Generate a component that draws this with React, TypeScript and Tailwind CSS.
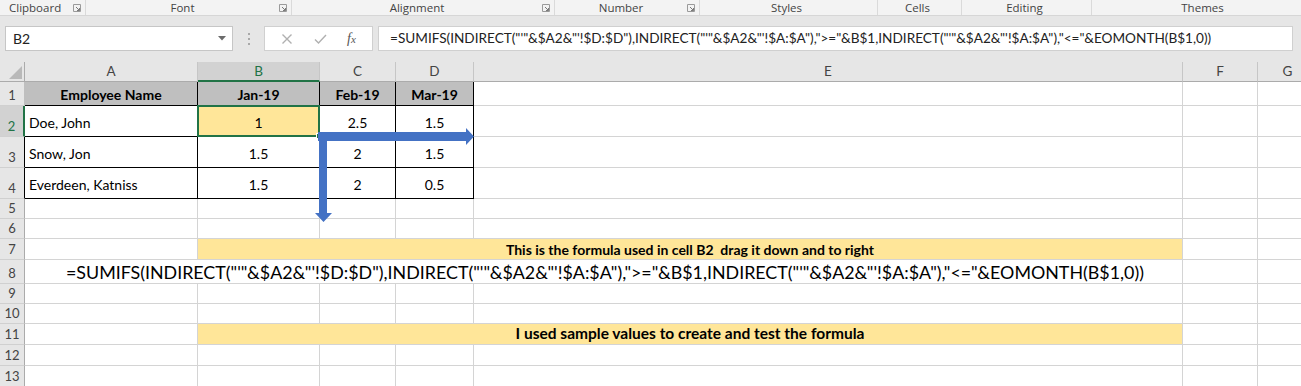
import React from 'react';

const W = { hdr: 25, A: 173, B: 122, C: 76, D: 78, E: 709, F: 75, G: 60 };

const formula =
    '=SUMIFS(INDIRECT("\'"&$A2&"\'!$D:$D"),INDIRECT("\'"&$A2&"\'!$A:$A"),">="&B$1,INDIRECT("\'"&$A2&"\'!$A:$A"),"<="&EOMONTH(B$1,0))';

const Launcher = () => (
    <svg width="8" height="8" viewBox="0 0 8 8" className="shrink-0">
        <path d="M0.5 7.5 V0.5 H7.5 V7.5 Z" fill="none" stroke="#9a9a9a" strokeWidth="1" />
        <path d="M3 3 L6.5 6.5 M4 6.5 H6.5 V4" fill="none" stroke="#7a7a7a" strokeWidth="1" />
    </svg>
);

const groups: { label: string; width: number; launcher?: boolean; left?: boolean }[] = [
    { label: 'Clipboard', width: 86, launcher: true, left: true },
    { label: 'Font', width: 206, launcher: true },
    { label: 'Alignment', width: 263, launcher: true },
    { label: 'Number', width: 145, launcher: true },
    { label: 'Styles', width: 178 },
    { label: 'Cells', width: 84 },
    { label: 'Editing', width: 130 },
    { label: 'Themes', width: 226 },
];

// a single sheet cell
const Cell: React.FC<{
    w: number;
    className?: string;
    children?: React.ReactNode;
}> = ({ w, className = '', children }) => (
    <div
        style={{ width: w }}
        className={`shrink-0 flex border-r border-b overflow-visible relative ${className}`}
    >
        {children}
    </div>
);

const RowHead: React.FC<{ n: number; h: string; edge?: string; active?: boolean }> = ({ n, h, edge = 'border-r-[#ababab]', active }) => (
    <div
        style={{ width: W.hdr }}
        className={`shrink-0 flex items-end justify-center pb-[1px] border-r border-b border-b-[#d0d0d0] ${edge} ${h} ${active ? 'bg-[#d2d2d2] text-[#217346]' : 'bg-[#e6e6e6] text-[#444]'}`}
    >
        <span className="text-[13px] leading-[18px]">{n}</span>
    </div>
);

const grid = 'border-[#d4d4d4]';
const tbl = 'border-black';

const TableRow: React.FC<{ n: number; name: string; vals: string[]; selected?: boolean }> = ({ n, name, vals, selected }) => (
    <div className="flex h-[31px]">
        <RowHead n={n} h="h-[31px]" edge={selected ? 'border-r-2 border-r-[#217346]' : 'border-r-black'} active={selected} />
        <Cell w={W.A} className={`${tbl} items-end pb-[3px] pl-[4px]`}>
            <span className="whitespace-nowrap">{name}</span>
        </Cell>
        <Cell w={W.B} className={`${tbl} items-center justify-center pt-[2px] ${selected ? 'bg-[#ffe699]' : ''}`}>
            <span>{vals[0]}</span>
            {selected && (
                <>
                    <div className="absolute -left-px -top-px -right-px -bottom-px border-2 border-[#217346]" />
                    <div className="absolute -right-[3px] -bottom-[3px] w-[6px] h-[6px] bg-[#217346] border border-white" />
                </>
            )}
        </Cell>
        <Cell w={W.C} className={`${tbl} items-center justify-center pt-[2px]`}>
            <span>{vals[1]}</span>
        </Cell>
        <Cell w={W.D} className={`${tbl} items-center justify-center pt-[2px]`}>
            <span>{vals[2]}</span>
        </Cell>
        <Cell w={W.E} className={grid} />
        <Cell w={W.F} className={grid} />
        <Cell w={W.G} className={grid} />
    </div>
);

const EmptyRow: React.FC<{ n: number; h: string }> = ({ n, h }) => (
    <div className={`flex ${h}`}>
        <RowHead n={n} h={h} />
        <Cell w={W.A} className={grid} />
        <Cell w={W.B} className={grid} />
        <Cell w={W.C} className={grid} />
        <Cell w={W.D} className={grid} />
        <Cell w={W.E} className={grid} />
        <Cell w={W.F} className={grid} />
        <Cell w={W.G} className={grid} />
    </div>
);

const NoteRow: React.FC<{ n: number; h: string; text: string; size: string }> = ({ n, h, text, size }) => (
    <div className={`flex ${h}`}>
        <RowHead n={n} h={h} />
        <Cell w={W.A} className={grid} />
        <Cell w={W.B + W.C + W.D + W.E} className={`${grid} bg-[#ffe699] items-center justify-center`}>
            <span className={`font-bold whitespace-pre ${size}`}>{text}</span>
        </Cell>
        <Cell w={W.F} className={grid} />
        <Cell w={W.G} className={grid} />
    </div>
);

export default function App() {
    const cols: { key: keyof typeof W; label: string }[] = [
        { key: 'A', label: 'A' },
        { key: 'B', label: 'B' },
        { key: 'C', label: 'C' },
        { key: 'D', label: 'D' },
        { key: 'E', label: 'E' },
        { key: 'F', label: 'F' },
        { key: 'G', label: 'G' },
    ];

    return (
        <div className="w-[1301px] h-[386px] overflow-hidden bg-white font-['Lato',sans-serif] text-[14px] text-black">
            {/* Ribbon group labels */}
            <div className="flex h-[16px] bg-[#f3f3f3] border-b border-[#d6d6d6] font-['Open_Sans',sans-serif] text-[11.5px] text-[#444]">
                {groups.map((g) => (
                    <div key={g.label} style={{ width: g.width }} className="shrink-0 flex items-center border-r border-[#dadada] pr-[4px]">
                        <span className={`flex-1 leading-[15px] ${g.left ? 'pl-[9px]' : 'text-center'}`}>{g.label}</span>
                        {g.launcher && <Launcher />}
                    </div>
                ))}
            </div>

            {/* Name box + formula bar */}
            <div className="flex items-start h-[46px] bg-[#e6e6e6] pt-[10px] pl-[5px]">
                <div className="flex items-center justify-between w-[228px] h-[25px] bg-white border border-[#c6c6c6] pl-[7px] pr-[6px]">
                    <span className="text-[14px] text-[#222]">B2</span>
                    <svg width="8" height="5" viewBox="0 0 8 5">
                        <path d="M0 0 H8 L4 4.5 Z" fill="#6b6b6b" />
                    </svg>
                </div>
                <div className="flex flex-col justify-center gap-[3px] w-[31px] h-[25px] items-center">
                    <span className="w-[2px] h-[2px] bg-[#a8a8a8]" />
                    <span className="w-[2px] h-[2px] bg-[#a8a8a8]" />
                    <span className="w-[2px] h-[2px] bg-[#a8a8a8]" />
                </div>
                <div className="flex items-center justify-around w-[109px] h-[25px] bg-white border border-[#d0d0d0] px-[6px]">
                    <svg width="12" height="12" viewBox="0 0 12 12">
                        <path d="M1.5 1.5 L10.5 10.5 M10.5 1.5 L1.5 10.5" stroke="#b0b0b0" strokeWidth="1.4" />
                    </svg>
                    <svg width="13" height="12" viewBox="0 0 13 12">
                        <path d="M1 6.5 L4.5 10 L12 2" fill="none" stroke="#b0b0b0" strokeWidth="1.4" />
                    </svg>
                    <span className="font-['Liberation_Serif',serif] italic text-[14px] text-[#555] leading-none">
                        f<span className="text-[11px]">x</span>
                    </span>
                </div>
                <div className="ml-[5px] flex items-center w-[915px] h-[25px] bg-white border border-[#d0d0d0] pl-[11px]">
                    <span className="whitespace-nowrap text-[13.6px] text-[#222]">{formula}</span>
                </div>
            </div>

            {/* Sheet */}
            <div className="relative">
                {/* column headers */}
                <div className="flex h-[20px]">
                    <div style={{ width: W.hdr }} className="shrink-0 flex items-end justify-end bg-[#e6e6e6] border-r border-b border-[#ababab] pr-[2px] pb-[2px]">
                        <svg width="13" height="13" viewBox="0 0 13 13">
                            <path d="M13 0 V13 H0 Z" fill="#b9b9b9" />
                        </svg>
                    </div>
                    {cols.map((c) => {
                        const active = c.key === 'B';
                        return (
                            <div
                                key={c.key}
                                style={{ width: W[c.key] }}
                                className={`shrink-0 flex items-center justify-center border-r border-r-[#c6c6c6] text-[13.5px] ${active ? 'bg-[#d2d2d2] text-[#217346] border-b-2 border-b-[#217346]' : 'bg-[#e6e6e6] text-[#444] border-b border-b-[#ababab]'}`}
                            >
                                {c.label}
                            </div>
                        );
                    })}
                </div>

                {/* row 1: headings */}
                <div className="flex h-[24px]">
                    <RowHead n={1} h="h-[24px]" edge="border-r-[#bfbfbf]" />
                    {[
                        { w: W.A, t: 'Employee Name' },
                        { w: W.B, t: 'Jan-19' },
                        { w: W.C, t: 'Feb-19' },
                        { w: W.D, t: 'Mar-19' },
                    ].map((c) => (
                        <Cell key={c.t} w={c.w} className={`${tbl} bg-[#bfbfbf] items-center justify-center pt-[1px]`}>
                            <span className="font-bold">{c.t}</span>
                        </Cell>
                    ))}
                    <Cell w={W.E} className={grid} />
                    <Cell w={W.F} className={grid} />
                    <Cell w={W.G} className={grid} />
                </div>

                <TableRow n={2} name="Doe, John" vals={['1', '2.5', '1.5']} selected />
                <TableRow n={3} name="Snow, Jon" vals={['1.5', '2', '1.5']} />
                <TableRow n={4} name="Everdeen, Katniss" vals={['1.5', '2', '0.5']} />

                <EmptyRow n={5} h="h-[20px]" />
                <EmptyRow n={6} h="h-[20px]" />
                <NoteRow n={7} h="h-[21px]" size="text-[14px]" text="This is the formula used in cell B2  drag it down and to right" />

                {/* row 8: formula text spilling over */}
                <div className="flex h-[24px]">
                    <RowHead n={8} h="h-[24px]" />
                    <Cell w={W.A + W.B + W.C + W.D + W.E} className={`${grid} items-center pl-[41px] pt-[2px]`}>
                        <span className="whitespace-nowrap text-[17.85px]">{formula}</span>
                    </Cell>
                    <Cell w={W.F} className={grid} />
                    <Cell w={W.G} className={grid} />
                </div>

                <EmptyRow n={9} h="h-[20px]" />
                <EmptyRow n={10} h="h-[20px]" />
                <NoteRow n={11} h="h-[21px]" size="text-[15.5px]" text="I used sample values to create and test the formula" />
                <EmptyRow n={12} h="h-[21px]" />
                <EmptyRow n={13} h="h-[21px]" />

                {/* drag arrows */}
                <svg className="absolute left-0 top-0 pointer-events-none" width="1301" height="324">
                    <polygon points="318,70 466,70 466,66 474,74.5 466,83 466,79 318,79" fill="#4472c4" />
                    <polygon points="319,70 327,70 327,151 332,151 323.5,160 315,151 319,151" fill="#4472c4" />
                </svg>
            </div>
        </div>
    );
}
